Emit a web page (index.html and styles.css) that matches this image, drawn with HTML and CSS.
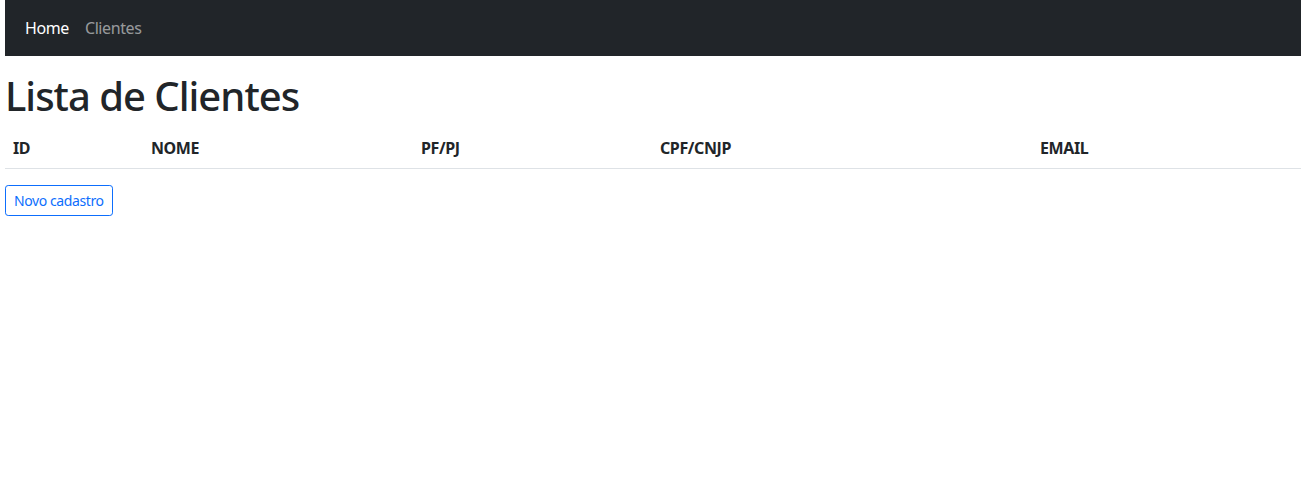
FILE: index.html
```html
<!DOCTYPE html>
<html lang="pt-BR">
<head>
<meta charset="utf-8">
<title>Lista de Clientes</title>
<link rel="stylesheet" href="styles.css">
</head>
<body>
<div class="page">
  <nav class="navbar">
    <div class="nav-inner">
      <a class="nav-link active" href="#">Home</a>
      <a class="nav-link" href="#">Clientes</a>
    </div>
  </nav>
  <h1 class="title">Lista de Clientes</h1>
  <table class="table">
    <thead>
      <tr>
        <th class="col-id">ID</th>
        <th class="col-nome">NOME</th>
        <th class="col-tipo">PF/PJ</th>
        <th class="col-doc">CPF/CNJP</th>
        <th class="col-email">EMAIL</th>
      </tr>
    </thead>
    <tbody></tbody>
  </table>
  <a class="btn-outline" href="#">Novo cadastro</a>
</div>
</body>
</html>
```
FILE: styles.css
```css
* { box-sizing: border-box; }
html, body {
  margin: 0;
  padding: 0;
  background: #fff;
}
body {
  font-family: "Noto Sans", "Open Sans", sans-serif;
  font-size: 16px;
  line-height: 1.5;
  color: #212529;
  letter-spacing: -0.4px;
}
.page {
  padding: 0 3px 0 5px;
}
.navbar {
  background: #212529;
  padding: 8px 0;
}
.nav-inner {
  display: flex;
  padding: 0 12px;
}
.nav-link {
  display: block;
  padding: 8px;
  color: rgba(255, 255, 255, 0.55);
  text-decoration: none;
  line-height: 24px;
}
.nav-link.active {
  color: #fff;
}
.title {
  margin: 16px 0 8px;
  font-size: 40px;
  font-weight: 500;
  line-height: 1.2;
  letter-spacing: -1px;
}
.table {
  width: 100%;
  border-collapse: collapse;
  margin-bottom: 16px;
}
.table th {
  text-align: left;
  font-weight: 700;
  padding: 8px;
  line-height: 24px;
  border-bottom: 1px solid #dee2e6;
}
.col-id { width: 138px; }
.col-nome { width: 270px; }
.col-tipo { width: 239px; }
.col-doc { width: 380px; }
.btn-outline {
  display: inline-block;
  font-size: 14px;
  line-height: 21px;
  padding: 4px 8px;
  border: 1px solid #0d6efd;
  border-radius: 3.2px;
  color: #0d6efd;
  text-decoration: none;
}
```
